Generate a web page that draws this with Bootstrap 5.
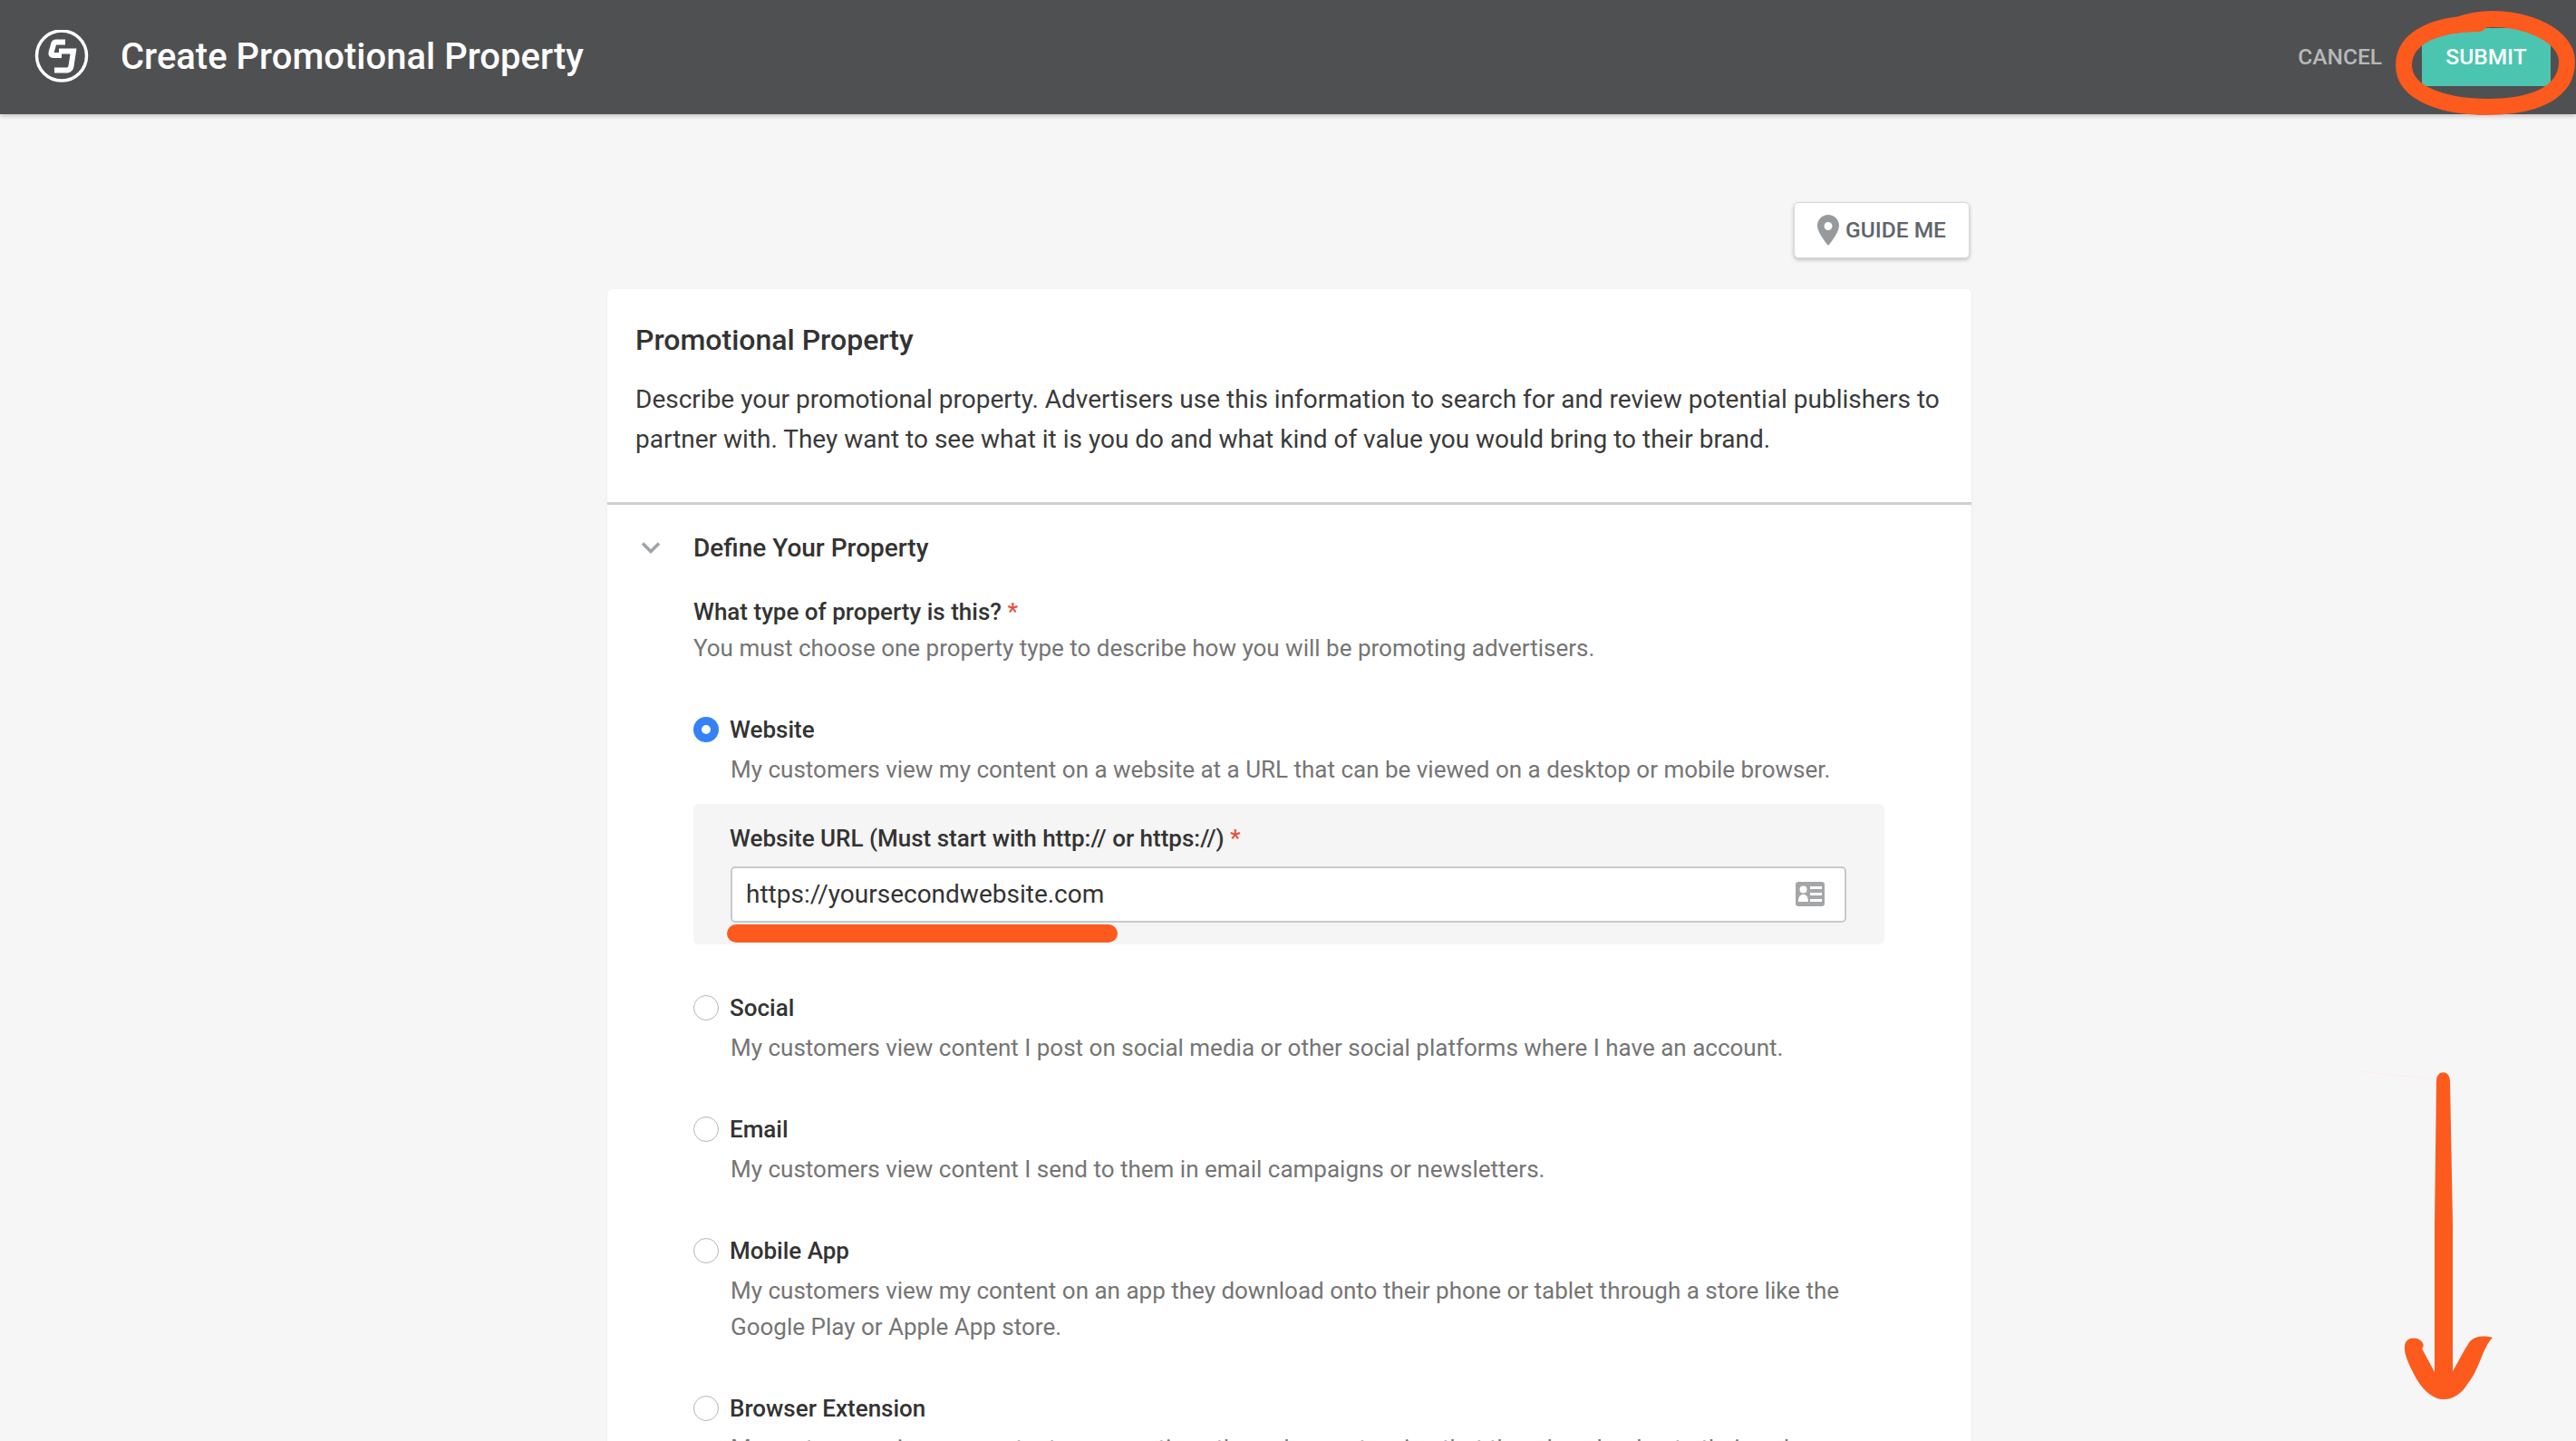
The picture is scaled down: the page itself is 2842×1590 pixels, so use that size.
<!DOCTYPE html>
<html lang="en"><head><meta charset="utf-8"><title>Create Promotional Property</title>
<link href="https://cdn.jsdelivr.net/npm/bootstrap@5.3.0/dist/css/bootstrap.min.css" rel="stylesheet">
<style>
html,body{height:100%;overflow:hidden}
body{background:#f6f6f7;font-family:Roboto,"Liberation Sans",sans-serif;color:#333;font-size:28px;line-height:43.5px}
.top-bar{height:126px;background:#4f5052;box-shadow:0 2px 5px rgba(0,0,0,.22);padding:0 28px 0 38px}
.top-title{font-size:40px;line-height:52px;color:#fff;font-weight:500;margin:0 0 0 35px}
.cancel-link{color:#b8b8b8;font-size:24.5px;font-weight:500;margin-right:44px;text-decoration:none}
.submit-btn{background:#4bc5b0;color:#fff;font-size:24.5px;font-weight:500;border:0;border-radius:4px;width:142px;height:64px;line-height:64px;padding:0;margin-top:-1px}
.page-wrap{width:1505px;margin-left:670px}
.guide-btn{background:#fff;color:#5f656c;font-size:24.5px;font-weight:500;height:62px;width:194px;border-radius:5px;border:1.5px solid #d5d8db;box-shadow:0 2px 4px rgba(0,0,0,.22);margin:97px 2px 34px 0;gap:7px}
.main-card{background:#fff;border-radius:6px;box-shadow:0 1px 3px rgba(0,0,0,.08)}
.card-head{padding:36px 31px 0;height:238px;border-bottom:3px solid #ccd0d2}
.card-head h1{font-size:32px;font-weight:500;line-height:40px;margin:0 0 24px;color:#333}
.card-head p{margin:0;color:#3a3a3a}
.sect-head{height:94px;padding-left:37px}
.sect-head span{font-size:28px;font-weight:500;margin-left:36px;color:#333;padding-top:1px}
.form-body{padding-left:95px;padding-right:95px;font-size:26px}
.q-label{font-weight:500;line-height:40px;color:#333;margin-top:3.5px}
.req{color:#e8503a}
.hint{color:#757575;line-height:40px}
.opt{padding-top:50.5px;margin-bottom:0}
.opt-row{gap:12px;line-height:40px;font-weight:500;color:#333}
.radio-dot{width:28px;height:28px;border-radius:50%;border:1.5px solid #b3b6b8;background:#fff;flex:none}
.radio-dot.on{border:9.5px solid #3581f6}
.opt-desc{padding-left:41px;color:#757575;line-height:40px;margin-top:3.5px}
.url-box{background:#f5f5f5;border-radius:6px;height:155px;width:1314px;margin-top:18px;padding:18px 40px 0 40px}
.url-box label{font-weight:500;line-height:40px;color:#333;display:block;margin-bottom:11px}
.url-input{height:62px;border:2.5px solid #c7cacc;border-radius:5px;background:#fff;padding:0 22.5px 0 15px;color:#333;width:1231px;margin-left:1px;font-size:28px}
.ink{position:absolute;left:0;top:0;pointer-events:none}
</style></head><body>
<header class="top-bar d-flex align-items-center">
<svg width="60" height="60" viewBox="0 0 60 60" fill="none" aria-hidden="true"><circle cx="30" cy="28.500" r="27.500" stroke="#fff" stroke-width="3.500"/><path d="M34 13.500H24q-2.500 0-3 2.500L18.500 25q-.7 3 2.500 3H30" stroke="#fff" stroke-width="6"/><path d="M27 23.500H43L40.500 40q-.6 4-4.500 4.500H22" stroke="#fff" stroke-width="6"/></svg>
<h1 class="top-title flex-grow-1">Create Promotional Property</h1>
<a class="cancel-link" href="#">CANCEL</a>
<button class="submit-btn" type="button">SUBMIT</button>
</header>
<main class="page-wrap">
<div class="d-flex justify-content-end"><button class="guide-btn btn d-flex align-items-center justify-content-center p-0" type="button"><svg width="24" height="34" viewBox="0 0 24 34" aria-hidden="true"><path fill="#979a9c" fill-rule="evenodd" d="M12 0C5.400 0 0 5.300 0 12c0 8 12 22 12 22s12-14 12-22C24 5.300 18.600 0 12 0zm0 8a4.500 4.500 0 1 1 0 9 4.500 4.500 0 0 1 0-9z"/></svg>GUIDE ME</button></div>
<section class="main-card">
<div class="card-head"><h1>Promotional Property</h1><p>Describe your promotional property. Advertisers use this information to search for and review potential publishers to partner with. They want to see what it is you do and what kind of value you would bring to their brand.</p></div>
<div class="sect-head d-flex align-items-center"><svg width="22" height="14" viewBox="0 0 22 14" fill="none" aria-hidden="true"><path d="M2 2.500l9 9 9-9" stroke="#9ea3a5" stroke-width="3.500"/></svg><span>Define Your Property</span></div>
<div class="form-body">
<div class="q-label">What type of property is this? <span class="req">*</span></div>
<div class="hint">You must choose one property type to describe how you will be promoting advertisers.</div>
<div class="opt"><div class="opt-row d-flex align-items-center"><span class="radio-dot on"></span>Website</div><div class="opt-desc">My customers view my content on a website at a URL that can be viewed on a desktop or mobile browser.</div>
<div class="url-box"><label>Website URL (Must start with http:// or https://) <span class="req">*</span></label>
<div class="url-input d-flex align-items-center justify-content-between"><span>https://yoursecondwebsite.com</span><svg width="32" height="27" viewBox="0 0 32 27" aria-hidden="true"><rect width="32" height="27" rx="3" fill="#a5a6a7"/><circle cx="8.500" cy="8.500" r="4" fill="#fff"/><path fill="#fff" d="M3 22c0-6 2.500-8 5.500-8s5.500 2 5.500 8zM16 5h13v3H16zM16 12h13v3H16zM16 19h13v3H16z"/></svg></div></div></div>
<div class="opt"><div class="opt-row d-flex align-items-center"><span class="radio-dot"></span>Social</div><div class="opt-desc">My customers view content I post on social media or other social platforms where I have an account.</div></div>
<div class="opt"><div class="opt-row d-flex align-items-center"><span class="radio-dot"></span>Email</div><div class="opt-desc">My customers view content I send to them in email campaigns or newsletters.</div></div>
<div class="opt"><div class="opt-row d-flex align-items-center"><span class="radio-dot"></span>Mobile App</div><div class="opt-desc">My customers view my content on an app they download onto their phone or tablet through a store like the Google Play or Apple App store.</div></div>
<div class="opt"><div class="opt-row d-flex align-items-center"><span class="radio-dot"></span>Browser Extension</div><div class="opt-desc">My customers view my content or promotions through an extension that they download onto their web browser.</div></div>
</div></section></main>
<svg class="ink" width="2842" height="1590" viewBox="0 0 2842 1590" fill="none" aria-hidden="true">
<path d="M2735 26C2690 26 2652 40 2652 72C2652 105 2700 118 2745 118C2800 118 2832 100 2832 68C2832 40 2790 21 2750 21C2735 21 2725 23 2710 28" stroke="#fd5a1e" stroke-width="18" stroke-linecap="round"/>
<path d="M812 1030H1223" stroke="#fd5a1e" stroke-width="20" stroke-linecap="round"/>
<path d="M2600 1182L2688 1191" stroke="#fdeee8" stroke-width="1"/>
<path fill="#fd5a1e" d="M2688 1193C2688 1180 2703 1180 2703 1193L2706 1350L2706 1513C2712 1503 2718 1490 2725 1480C2730 1475 2738 1473 2750 1476C2744 1482 2741 1490 2738 1497C2732 1512 2728 1520 2723 1526C2716 1538 2706 1544 2696 1544C2684 1544 2672 1534 2663 1516C2658 1506 2652 1494 2653 1486C2653 1478 2660 1475 2667 1477C2672 1479 2675 1483 2673 1487L2672 1488L2686 1514L2686 1350Z"/>
</svg>
<script src="https://cdn.jsdelivr.net/npm/bootstrap@5.3.0/dist/js/bootstrap.bundle.min.js"></script>
</body></html>
